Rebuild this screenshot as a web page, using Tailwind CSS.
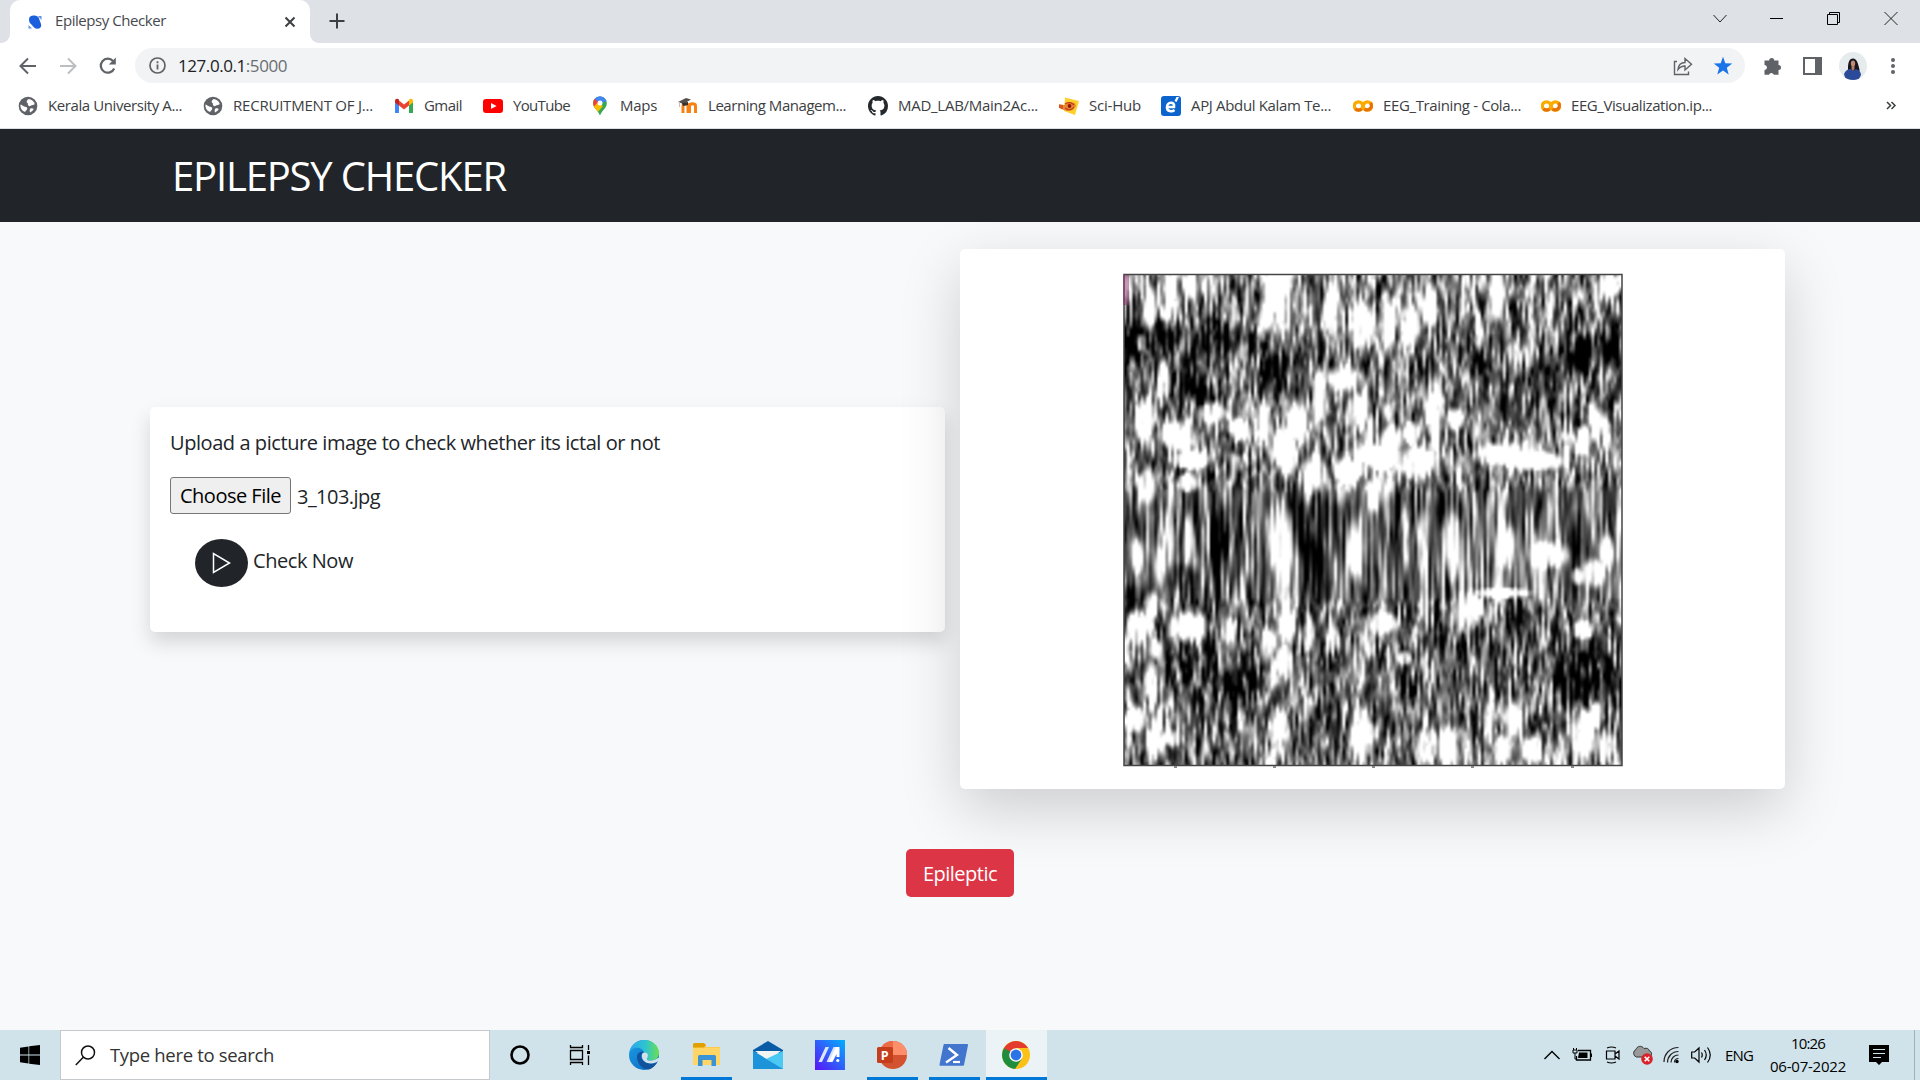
<!DOCTYPE html>
<html lang="en">
<head>
<meta charset="utf-8">
<title>Epilepsy Checker</title>
<script src="https://cdn.jsdelivr.net/npm/@tailwindcss/browser@4"></script>
</head>
<body class="w-[1920px] h-[1080px] overflow-hidden flex flex-col bg-[#f8f9fb] font-['Open_Sans','Noto_Sans',sans-serif] text-[#212529]">

<svg class="hidden">
  <symbol id="globe" viewBox="0 0 20 20"><circle cx="10" cy="10" r="9.300" fill="#5f6368"/><path d="M2.500 8.500c2 .3 2.600 2 4.500 2.200 2 .2 2.500 1 2.200 2.300-.3 1.300-1.700 1.500-2 3-3-1-5.200-3.800-4.700-7.500zM11 3c3 .5 5 2.500 5.800 5-1.300 1.600-2.700.6-3.800 1.600-1.200 1-2.600.6-3-.6-.4-1 .4-1.500-.8-2.200C8 6.200 8.700 3.800 11 3zM12.500 12.500c1.300-.6 2.700-.2 3.200.6-.8 1.800-2 2.700-3.600 3.300-.6-1.200-.6-3 .4-3.900z" fill="#fff"/></symbol>
  <symbol id="colab" viewBox="0 0 20 20"><circle cx="5.500" cy="10" r="4.200" fill="none" stroke="#f9ab00" stroke-width="3.300"/><circle cx="14.500" cy="10" r="4.200" fill="none" stroke="#f9ab00" stroke-width="3.300"/><path d="M11.500 12.900A4.200 4.200 0 0 0 17.500 7.100" fill="none" stroke="#e8710a" stroke-width="3.300"/><path d="M2.500 12.900A4.200 4.200 0 0 0 8.500 12.900" fill="none" stroke="#e8710a" stroke-width="3.300"/></symbol>
</svg>

<!-- tab strip -->
<header class="h-[129px] shrink-0 flex flex-col bg-white border-b border-[#dcdee1]">
  <div class="h-[43px] shrink-0 flex bg-[#dee1e6]">
    <div class="w-[10px] bg-white"><div class="h-full bg-[#dee1e6] rounded-br-[9px]"></div></div>
    <div class="w-[300px] h-full bg-[#dee1e6]">
      <div class="h-full bg-white rounded-t-[10px] flex items-center pl-[18px] pr-[13px]">
        <svg class="w-[14px] h-[14px]" viewBox="0 0 14 14"><path d="M1 4.500C1 1.500 3 .5 5.500.5c3 0 5.500 1 6 4.500l1.500 4c.8 3-1 4.700-3.500 4.700C6.500 13.700 5.500 12 4 10 2 8.500 1 7 1 4.500z" fill="#1a5fdc"/><path d="M.5 13.500V10l3.500 3.500zM10 1h3.500v4z" fill="#5d92ea"/></svg>
        <span data-w="111" class="ml-[13px] -mt-[2px] text-[15px] text-[#45494e] whitespace-nowrap">Epilepsy Checker</span>
        <svg class="ml-auto w-[14px] h-[14px]" viewBox="0 0 14 14"><path d="M2.500 2.500l9 9M11.500 2.500l-9 9" stroke="#3c4043" stroke-width="2"/></svg>
      </div>
    </div>
    <div class="w-[10px] bg-white"><div class="h-full bg-[#dee1e6] rounded-bl-[9px]"></div></div>
    <svg class="mt-[13px] ml-[9px] w-4 h-4" viewBox="0 0 16 16"><path d="M8 .5v15M.5 8h15" stroke="#3c4043" stroke-width="2"/></svg>
    <div class="ml-auto flex gap-[43px] mt-[11px] mr-[22px]">
      <svg class="w-[14px] h-[14px]" viewBox="0 0 14 14"><path d="M.5 4l6.500 7 6.500-7" fill="none" stroke="#222"/></svg>
      <svg class="w-[14px] h-[14px]" viewBox="0 0 14 14"><path d="M0 7.500h13" stroke="#000"/></svg>
      <svg class="w-[14px] h-[14px]" viewBox="0 0 14 14"><path d="M.5 3.500h10v10H.5zM2.500 3.500v-2h10v10h-2" fill="none" stroke="#000"/></svg>
      <svg class="w-[14px] h-[14px]" viewBox="0 0 14 14"><path d="M.5 1l13 13M13.500 1L.5 14" fill="none" stroke="#222"/></svg>
    </div>
  </div>

  <!-- toolbar -->
  <div class="h-[45px] shrink-0 flex items-center pl-[18px] pr-[18px] text-[#5f6368]">
    <svg class="w-[20px] h-[20px]" viewBox="0 0 20 20"><path d="M18 10H2.500M10 2.500L2.500 10l7.500 7.500" fill="none" stroke="#5f6368" stroke-width="2"/></svg>
    <svg class="ml-[20px] w-[20px] h-[20px]" viewBox="0 0 20 20"><path d="M2 10h15.500M10 2.500l7.500 7.500-7.500 7.500" fill="none" stroke="#bcbfc2" stroke-width="2"/></svg>
    <svg class="ml-[20px] w-[20px] h-[20px]" viewBox="0 0 20 20"><path d="M16.200 12.500A7 7 0 1 1 15 5" fill="none" stroke="#5f6368" stroke-width="2.200"/><path d="M17.800 1.500V8.500H10.800z" fill="#5f6368"/></svg>
    <div class="ml-[17px] w-[1610px] h-[35px] rounded-full bg-[#f1f3f4] flex items-center pl-[14px] pr-[12px]">
      <svg class="w-[17px] h-[17px]" viewBox="0 0 17 17"><circle cx="8.500" cy="8.500" r="7.500" fill="none" stroke="#5f6368" stroke-width="1.700"/><path d="M8.500 7.500v5M8.500 4.200v2" stroke="#5f6368" stroke-width="1.800"/></svg>
      <span data-w="109" class="ml-[12px] text-[17px] text-[#6a6e73] whitespace-nowrap"><span class="text-[#202124]">127.0.0.1</span>:5000</span>
      <svg class="ml-auto w-[20px] h-[20px]" viewBox="0 0 20 20"><path d="M4 5.500H1.500v13h14V15.500" fill="none" stroke="#5f6368" stroke-width="1.400"/><path d="M5 13.500c.5-5 3-7 7-7V2.500l6.500 5.700-6.500 5.800v-4c-3 0-5 1-7 3.500z" fill="none" stroke="#5f6368" stroke-width="1.400"/></svg>
      <svg class="ml-[20px] w-[20px] h-[20px]" viewBox="0 0 20 20"><path d="M10 .8l2.300 6.500 6.900.2-5.400 4.200 1.900 6.700L10 14.500l-5.700 3.900 1.900-6.700L.8 7.500l6.900-.2z" fill="#1a73e8"/></svg>
    </div>
    <svg class="ml-[18px] w-[20px] h-[20px]" viewBox="0 0 20 20"><path d="M1.500 4.500h4.700a2.500 2.500 0 1 1 5 0H15.500V9a2.500 2.500 0 1 1 0 5v4.800h-4.700a2.500 2.500 0 0 0-4.800 0H1.500V14a2.500 2.500 0 0 0 0-5z" fill="#5f6368"/></svg>
    <svg class="ml-[20px] w-[19px] h-[18px]" viewBox="0 0 19 18"><path d="M1 1h17v16H1z" fill="none" stroke="#5f6368" stroke-width="2"/><path d="M12 0h7v18h-7z" fill="#5f6368"/></svg>
    <svg class="ml-[17px] w-[28px] h-[28px]" viewBox="0 0 28 28"><clipPath id="av"><circle cx="14" cy="14" r="14"/></clipPath><g clip-path="url(#av)"><path d="M0 0h28v28H0z" fill="#e6ebee"/><path d="M9 17c0-6 1-10.500 5-10.500s5 5 6.500 11L20 24H9z" fill="#17151c"/><path d="M5 22c2-4 4-5 7-5l2 2 3-2c3 1 5 3 5 6l-3 6H7z" fill="#2b4a99"/><ellipse cx="14" cy="11.500" rx="2.200" ry="3" fill="#c08a76"/><path d="M12.500 14h3v3l-1.500 2-1.500-2z" fill="#b27c69"/></g></svg>
    <svg class="ml-auto mr-[6px] w-[6px] h-[18px]" viewBox="0 0 6 18"><circle cx="3" cy="3" r="2" fill="#5f6368"/><circle cx="3" cy="9" r="2" fill="#5f6368"/><circle cx="3" cy="15" r="2" fill="#5f6368"/></svg>
  </div>

  <!-- bookmarks -->
  <div class="h-[36px] flex items-center pl-[18px] text-[15px] text-[#3c4043] whitespace-nowrap [&>div]:flex [&>div]:items-center [&>div]:gap-[10px] [&>div]:shrink-0 [&_svg]:w-5 [&_svg]:h-5 [&_svg]:shrink-0 [&_span]:-mt-px">
    <div class="w-[185px]"><svg><use href="#globe"/></svg><span data-w="134">Kerala University A...</span></div>
    <div class="w-[191px]"><svg><use href="#globe"/></svg><span data-w="140">RECRUITMENT OF J...</span></div>
    <div class="w-[89px]"><svg viewBox="0 0 20 20"><path d="M1 5v12h4V9z" fill="#4285f4"/><path d="M19 5v12h-4V9z" fill="#34a853"/><path d="M5 4.500l5 4 5-4v5l-5 4-5-4z" fill="#ea4335"/><path d="M1 5c0-2 2-3 4-1.500v6l-4-3z" fill="#c5221f"/><path d="M19 5c0-2-2-3-4-1.500v6l4-3z" fill="#fbbc04"/></svg><span data-w="38">Gmail</span></div>
    <div class="w-[107px]"><svg viewBox="0 0 20 20"><rect y="3" width="20" height="14" rx="3" fill="#f00"/><path d="M8 7l5.500 3L8 13z" fill="#fff"/></svg><span data-w="57">YouTube</span></div>
    <div class="w-[88px]"><svg viewBox="0 0 20 20"><clipPath id="pin"><path d="M10 .5c4 0 6.800 3 6.800 6.700 0 4.800-4.300 6.300-6.800 12.300C7.500 13.500 3.200 12 3.200 7.200 3.200 3.500 6 .5 10 .5z"/></clipPath><g clip-path="url(#pin)"><path d="M0 0h20v20H0z" fill="#34a853"/><path d="M3 0h14l-10 9z" fill="#4285f4"/><path d="M0 2l5 1 4 4-6 6z" fill="#ea4335"/><path d="M2 13l5-6 6 3-6 7z" fill="#fbbc04"/><path d="M5 0h12v5l-6 2z" fill="#4285f4"/></g><circle cx="10" cy="7" r="2.500" fill="#fff"/></svg><span data-w="37">Maps</span></div>
    <div class="w-[190px]"><svg viewBox="0 0 20 20"><path d="M5 17V10c0-3 5-3 5 0v7M11.500 17V10c0-3 6-3 6 0v7" fill="none" stroke="#f98012" stroke-width="3"/><path d="M0 6l8-4 5 1.500L5.500 8z" fill="#55504c"/><path d="M4 7l6-1v3l-5 1z" fill="#333"/><path d="M1.500 6v5" stroke="#cbb"/></svg><span data-w="138">Learning Managem...</span></div>
    <div class="w-[191px]"><svg viewBox="0 0 16 16"><path fill="#24292e" d="M8 0C3.580 0 0 3.580 0 8c0 3.540 2.290 6.530 5.470 7.590.4.070.55-.17.55-.38 0-.19-.01-.82-.01-1.490-2.010.37-2.530-.49-2.690-.94-.09-.23-.48-.94-.82-1.130-.28-.15-.68-.52-.01-.53.63-.01 1.080.58 1.230.82.720 1.210 1.870.87 2.330.66.070-.52.28-.87.51-1.070-1.780-.2-3.640-.89-3.640-3.950 0-.87.31-1.590.82-2.150-.08-.2-.36-1.020.08-2.120 0 0 .67-.21 2.200.82.640-.18 1.320-.27 2-.27s1.360.09 2 .27c1.530-1.040 2.200-.82 2.200-.82.440 1.100.16 1.920.08 2.120.51.560.82 1.270.82 2.150 0 3.070-1.870 3.750-3.650 3.950.29.25.54.730.54 1.480 0 1.070-.01 1.930-.01 2.200 0 .21.15.46.55.38A8.010 8.010 0 0 0 16 8c0-4.420-3.580-8-8-8z"/></svg><span data-w="140">MAD_LAB/Main2Ac...</span></div>
    <div class="w-[102px]"><svg viewBox="0 0 20 20"><path d="M6 1.500l14 3.500-4 14-11-4z" fill="#ffd02c"/><path d="M0 8l5 1 6-3 5 1 1 3-3 4-6 1-6-2-2-1z" fill="#e8892f"/><path d="M6 8q5-3 9 1M6 12q5 4 9-1M1 9v3M3 9v4" stroke="#c43a1a" fill="none" stroke-width="1.200"/><circle cx="10.500" cy="10" r="1.900" fill="#8c1a10"/></svg><span data-w="52">Sci-Hub</span></div>
    <div class="w-[192px]"><svg viewBox="0 0 20 20"><rect width="20" height="20" rx="3" fill="#0b63ce"/><path d="M6 11h7C13.500 7.500 12 6.800 10 6.800c-2.500 0-4 2-4 4.400 0 4.500 5 5 7.500 2.800" fill="none" stroke="#fff" stroke-width="2.600"/><path d="M13.500 5l2-4h2.500l-2.500 5z" fill="#fff"/></svg><span data-w="140">APJ Abdul Kalam Te...</span></div>
    <div class="w-[188px]"><svg><use href="#colab"/></svg><span data-w="138">EEG_Training - Cola...</span></div>
    <div class="w-[340px]"><svg><use href="#colab"/></svg><span data-w="141">EEG_Visualization.ip...</span></div>
    <svg viewBox="0 0 20 20"><path d="M6 6l3.500 3.500L6 13M10.500 6L14 9.500 10.500 13" fill="none" stroke="#3c4043" stroke-width="1.500"/></svg>
  </div>
</header>

<!-- page -->
<nav class="h-[93px] shrink-0 bg-[#212529] flex items-center pl-[172px]">
  <span data-w="334" class="mt-px text-[40px] leading-none text-white whitespace-nowrap">EPILEPSY CHECKER</span>
</nav>
<main class="h-[808px] shrink-0 flex flex-col items-center overflow-hidden">
  <div class="mt-[27px] w-[1635px] h-[540px] self-start ml-[150px] flex items-center justify-between shrink-0">
    <section class="w-[795px] h-[225px] bg-white rounded-[5px] shadow-[0_10px_20px_rgba(0,0,0,0.15)] px-[20px] pt-[21px] text-[20px] leading-[30px] whitespace-nowrap">
      <p><span data-w="490">Upload a picture image to check whether its ictal or not</span></p>
      <div class="mt-[19px] flex items-center">
        <div class="w-[121px] h-[37px] border border-[#767676] rounded-[3px] bg-[#efefef] text-black flex items-center justify-center pt-[2px]"><span data-w="101">Choose File</span></div>
        <span data-w="83" class="ml-[6px] mt-[4px]">3_103.jpg</span>
      </div>
      <div class="mt-[25px] ml-[25px] flex">
        <div class="w-[53px] h-[48px] rounded-[50%] bg-[#212529] flex items-center justify-center">
          <svg class="w-[20px] h-[22px]" viewBox="0 0 20 22"><path d="M1.500 1.500v19l16-9.500z" fill="none" stroke="#fff" stroke-width="1.500"/></svg>
        </div>
        <span data-w="100" class="ml-[5px] mt-[7px]">Check Now</span>
      </div>
    </section>
    <section class="w-[825px] h-[540px] bg-white rounded-[5px] shadow-[0_20px_60px_rgba(0,0,0,0.175)] pt-[24px] pl-[163px]">
      <canvas id="eeg" class="w-[500px] h-[496px]" width="500" height="496"></canvas>
    </section>
  </div>
  <button class="mt-[60px] w-[108px] h-[48px] shrink-0 rounded-[5px] bg-[#dc3545] text-white text-[20px] flex items-center justify-center"><span data-w="74" class="mt-[2px] whitespace-nowrap">Epileptic</span></button>
</main>

<!-- taskbar -->
<footer class="h-[50px] shrink-0 bg-[#d0e3eb] flex items-center text-black">
  <svg class="ml-[20px] w-[20px] h-[20px]" viewBox="0 0 20 20"><path d="M0 2.700l8.500-1.200v8H0zM9.200 1.300L20 0v9.500H9.200zM0 10.500h8.500v8L0 17.300zM9.200 10.500H20V20L9.200 18.700z"/></svg>
  <div class="ml-[20px] w-[430px] h-[50px] bg-white border border-[#c5c9cc] flex items-center pl-[14px]">
    <svg class="w-[21px] h-[21px]" viewBox="0 0 21 21"><circle cx="13" cy="7.500" r="6.500" fill="none" stroke="#111" stroke-width="1.500"/><path d="M8.500 12L.8 20" stroke="#111" stroke-width="1.500"/></svg>
    <span data-w="164" class="ml-[14px] text-[18.500px] text-[#333] whitespace-nowrap">Type here to search</span>
  </div>
  <svg class="ml-[20px] w-[20px] h-[20px]" viewBox="0 0 20 20"><circle cx="10" cy="10" r="8.500" fill="none" stroke="#000" stroke-width="2.600"/></svg>
  <svg class="ml-[39px] w-[22px] h-[22px]" viewBox="0 0 22 22"><path d="M1.500 6.500h12v9h-12zM1.500 1v2.500h12V1M1.500 21v-2.500h12V21M19.500 1v5M19.500 11.500V21" fill="none" stroke="#000" stroke-width="1.300"/><path d="M18 7h3v3h-3z"/></svg>
  <div class="ml-[28px] h-full flex [&>div]:h-full [&>div]:flex [&>div]:items-center [&>div]:justify-center [&>div]:border-b-[3px] [&>div]:border-transparent [&>div]:pt-[3px] [&>div]:pr-[2px] [&_svg]:w-[30px] [&_svg]:h-[30px]">
    <div class="w-[51px] mr-[11px]">
      <svg viewBox="0 0 30 30"><defs><linearGradient id="e1" x1="0" x2="1"><stop offset="0" stop-color="#2aa6ee"/><stop offset=".55" stop-color="#2fc4cf"/><stop offset="1" stop-color="#6be04e"/></linearGradient><linearGradient id="e2" x1="0" x2="1" y2="1"><stop offset="0" stop-color="#1b9de2"/><stop offset="1" stop-color="#0a66c2"/></linearGradient></defs><circle cx="15" cy="15" r="15" fill="url(#e2)"/><path d="M.5 12C2 5 8 0 15 0c9 0 15 6 15 13 0 5-4 7.500-8 7.500-3 0-4.500-1-4-2 2-3 0-6.500-3-6.500-1-3-5-5-9-4-3 1-4.500 2.500-5.500 4z" fill="url(#e1)"/><path d="M8 17c0 7 6 13 12 12.500 3-1 6.500-4 8.500-7.500-5 2.500-12 2-15-2-2-3-1.500-6 1-8-4-1-6.500 2-6.500 5z" fill="#10529c"/><path d="M13 14.500c-1 5 3 9 9 9 3 0 5.500-1.200 7-2.500l3-3v-1l-4 1.500c-4 3-11 2.500-10 0 2-3 .5-6-1.500-6-2 0-3 .5-3.500 2z" fill="#d0e3eb"/></svg>
    </div>
    <div class="w-[51px] mr-[11px] border-[#0078d7]!">
      <svg viewBox="0 0 30 30"><path d="M2 4h12l1 3h14v18H2z" fill="#ffca45"/><path d="M2 4.500A1.500 1.500 0 0 1 3.500 3H13l2 2-2 2.500H2z" fill="#e0a000"/><path d="M2 8h27v17H2z" fill="#ffd566"/><path d="M7 26V16.500A1.500 1.500 0 0 1 8.500 15h15a1.500 1.500 0 0 1 1.500 1.500V26h-4.500v-6h-9v6z" fill="#3a93d4"/></svg>
    </div>
    <div class="w-[51px] mr-[11px]">
      <svg viewBox="0 0 30 30"><path d="M0 10L15 1l15 9v3H0z" fill="#0a5ba5"/><path d="M2 11h26L15 20z" fill="#f4f4f4"/><path d="M0 11l15 9 15-9v18H0z" fill="#2faee8"/><path d="M30 11L13 19 0 29h30z" fill="#4cc9f2"/><path d="M0 11l30 18H0z" fill="#1d93da"/></svg>
    </div>
    <div class="w-[51px] mr-[11px]">
      <svg viewBox="0 0 30 30"><defs><linearGradient id="ma" x1="0" y1="1" x2="1" y2="0"><stop offset="0" stop-color="#5b12f5"/><stop offset=".5" stop-color="#3060fb"/><stop offset="1" stop-color="#00b0ff"/></linearGradient></defs><path d="M0 0h30v30H0z" fill="url(#ma)"/><path d="M10.500 7H14L7 22H3.500zM18.500 7H22l-7 15h-3.500z" fill="#dbe5ff"/><path d="M21 7h3.500v10h-3v-3l-4 8H14z" fill="#fff"/><circle cx="22.800" cy="20.500" r="1.600" fill="#fff"/></svg>
    </div>
    <div class="w-[51px] mr-[11px] border-[#0078d7]!">
      <svg viewBox="0 0 30 30"><circle cx="16" cy="15" r="14" fill="#d35230"/><path d="M16 1a14 14 0 0 1 14 14H16z" fill="#ff8f6b"/><path d="M16 1v14H2A14 14 0 0 1 16 1z" fill="#ed6c47"/><rect y="7" width="16" height="16" rx="1.500" fill="#c43e1c"/><text x="3.800" y="19.500" font-family="Open Sans" font-weight="700" font-size="12.500" fill="#fff">P</text></svg>
    </div>
    <div class="w-[51px] mr-[6px] border-[#0078d7]!">
      <svg viewBox="0 0 30 30"><path d="M5.500 4H28a1 1 0 0 1 1 1.200L25 25a1 1 0 0 1-1 .8H1.500a1 1 0 0 1-1-1.200L4.500 5a1 1 0 0 1 1-1z" fill="#4275ce"/><path d="M9.500 8l8.500 7L7 22.500" fill="none" stroke="#fff" stroke-width="2.400"/><path d="M14 22h7" stroke="#fff" stroke-width="2.200"/></svg>
    </div>
    <div class="w-[61px] bg-[#ecf3f7] border-[#0078d7]!">
      <svg viewBox="0 0 30 30"><circle cx="15" cy="15" r="14" fill="#fbc116"/><path d="M15 15L2.900 8A14 14 0 0 0 14 29l7-10.500z" fill="#1e8e3e"/><path d="M2.900 8A14 14 0 0 1 27.100 8H15L9 18.500z" fill="#e33b2e"/><path d="M2.900 8l6 10.500L15 15z" fill="#1e8e3e"/><circle cx="15" cy="15" r="6.800" fill="#fff"/><circle cx="15" cy="15" r="5.400" fill="#2a74e8"/></svg>
    </div>
  </div>
  <div class="ml-auto flex items-center h-full">
    <svg class="w-[16px] h-[10px]" viewBox="0 0 16 10"><path d="M.5 9L8 1.500 15.500 9" fill="none" stroke="#000" stroke-width="1.400"/></svg>
    <svg class="ml-[12px] w-[20px] h-[16px]" viewBox="0 0 20 16"><path d="M6 3.500h12.500v9.500H4.500V9M19.500 6.500v3.500" fill="none" stroke="#000" stroke-width="1.300"/><path d="M7 5.500h8.500V11H6z"/><path d="M1 3h4v3H1zM1.500 1v2M4.500 1v2M3 6v6h1.500" fill="none" stroke="#000"/></svg>
    <svg class="ml-[13px] w-[16px] h-[18px]" viewBox="0 0 16 18"><path d="M1.500 5h8.500v8H1.500zM10 8l4-3v8l-4-3M2 2q4.500-2 9 0M2 16q4.500 2 9 0" fill="none" stroke="#000" stroke-width="1.200"/></svg>
    <svg class="ml-[11px] w-[21px] h-[20px]" viewBox="0 0 21 20"><path d="M4.500 12a4 4 0 0 1-.5-7.500C5 1 9.500 0 12 3.500c3-1 5 .5 5.500 2.500 2.500.5 3 5 0 6z" fill="#999" stroke="#333"/><circle cx="15" cy="14" r="5.800" fill="#d9222a"/><path d="M12.700 11.700l4.600 4.600M17.300 11.700l-4.600 4.600" stroke="#fff" stroke-width="1.600"/></svg>
    <svg class="ml-[10px] w-[17px] h-[18px]" viewBox="0 0 17 18"><path d="M1 16C1 8 7 1.500 15.500 1.500M4.500 16.500c0-6 4.500-11 11-11M8 16.500c0-4 3-7.500 7.500-7.500M11.500 16.500c0-2.500 1.500-4 4-4" fill="none" stroke="#222" stroke-width="1.200"/><circle cx="14" cy="15.500" r="1.700"/></svg>
    <svg class="ml-[11px] w-[21px] h-[18px]" viewBox="0 0 21 18"><path d="M.7 6h3L8 2v14l-4.300-4H.7zM10.500 6.500q1.500 2.500 0 5M13.500 4q3.500 5 0 10M16.500 1.500q5.500 7.500 0 15" fill="none" stroke="#000" stroke-width="1.200"/></svg>
    <span data-w="28" class="ml-[13px] text-[15px]">ENG</span>
    <div class="ml-[17px] w-[76px] text-[15px] leading-[23px] flex flex-col items-center whitespace-nowrap"><span data-w="34">10:26</span><span data-w="76">06-07-2022</span></div>
    <svg class="ml-[23px] w-[20px] h-[20px]" viewBox="0 0 20 20"><path d="M0 0h20v17h-7l-3 3-3-3H0z"/><path d="M4 4.500h12M4 8.500h12M4 12.500h8" stroke="#d0e3eb" stroke-width="1.200"/></svg>
    <div class="ml-[25px] w-[6px] h-full border-l border-[#9fb2bb]"></div>
  </div>
</footer>

<script>
// Tracks each label to its slot width once the styles are in place
function fit() {
  document.querySelectorAll('[data-w]').forEach(function (el) {
    el.style.display = 'inline-block';
    el.style.letterSpacing = '0px';
    var r = document.createRange();
    r.selectNodeContents(el);
    var n = el.textContent.length, w = r.getBoundingClientRect().width;
    el.style.letterSpacing = ((+el.dataset.w - w) / n) + 'px';
  });
}
fit();
window.addEventListener('load', fit);
document.fonts.ready.then(fit);
new ResizeObserver(fit).observe(document.querySelector('nav'));

// Spectrogram: brightness grid modulated by vertically streaked noise
var map = [
'676559564445664546','554448566665453445','212135546563433423','131343365553234324',
'451444466556443344','766667746557633446','567549647986488776','566545976766544445',
'544454235534543445','554547246446456546','656458347556547656','443445355443556466',
'566434554655754455','654536654444334544','553335334444433423','553434445543345324',
'653446346553465365','565357346557565476'];
// Peaks and troughs: centre x, centre y, radius x, radius y
var bright = [[490,110,42,100],[115,150,20,60],[175,110,18,70],[235,75,20,40],[655,140,20,70],[745,200,35,55],[820,200,20,80],[885,190,25,50],[945,140,22,60],[1145,100,20,90],[1090,220,12,60],[1480,80,25,35],[690,360,45,35],[620,420,18,70],[100,490,25,60],[200,530,45,40],[380,510,25,30],[455,490,18,60],[520,570,35,70],[550,490,30,60],[300,460,35,30],[740,450,25,45],[960,450,25,85],[800,590,80,35],[830,550,35,40],[900,610,60,40],[1020,480,25,30],[890,520,20,30],[1160,585,80,30],[1260,605,90,25],[240,600,50,25],[230,670,30,25],[600,645,30,52],[710,630,50,30],[110,680,25,50],[510,850,28,110],[720,870,22,80],[1015,860,22,90],[1175,860,28,60],[1300,885,50,35],[780,700,18,50],[230,840,15,70],[80,890,18,50],[150,920,15,60],[1160,1000,75,14],[1070,1050,25,50],[120,1040,20,40],[80,1100,25,50],[235,1100,50,40],[350,1110,20,35],[520,1090,20,50],[590,1120,15,50],[655,1130,15,50],[800,1090,50,30],[465,1150,20,50],[510,1200,20,40],[870,1195,20,20],[120,1265,18,55],[135,1170,15,30],[500,1410,28,70],[740,1420,25,80],[130,1440,25,60],[930,1460,30,50],[1000,1460,30,60],[1125,1390,12,60],[1160,1470,25,40],[1250,1470,25,40],[1400,1430,40,70],[1440,1370,15,40],[80,1380,25,35],[180,1435,25,25],[1190,1370,22,40],[1400,540,25,40],[1435,490,15,60],[1430,940,35,40],[1470,880,20,50],[1400,1110,35,25],[1385,950,18,25],[1240,270,13,60],[1300,150,13,60],[1200,300,12,60],[90,250,12,25],[155,370,15,60],[1465,1460,15,50]];
var dark = [[150,220,60,40],[80,260,50,50],[210,400,50,60],[320,230,60,60],[440,240,40,30],[490,350,50,60],[1080,300,50,50],[1390,280,35,110],[1480,250,35,60],[860,480,30,25],[600,850,38,160],[310,850,12,130],[200,950,50,35],[1030,560,30,40],[1210,1060,40,35],[240,1200,80,60],[250,1280,40,60],[390,1270,60,60],[1390,1250,80,90],[1000,1170,40,70],[620,1380,40,50],[660,1210,40,40],[1050,830,12,90],[380,570,25,20],[70,1020,30,40],[1260,1390,30,25],[210,635,25,12],[890,730,50,60]];
var seed = 77;
function rnd() { seed = (seed * 1664525 + 1013904223) >>> 0; return seed / 4294967296; }
var N = 180, src = document.createElement('canvas');
src.width = N; src.height = N;
var sc = src.getContext('2d'), im = sc.createImageData(N, N);
function layer(kx, ky) {
  var gw = Math.ceil(N / kx) + 3, gh = Math.ceil(N / ky) + 3, g = [], off = [];
  for (var i = 0; i < gw * gh; i++) g.push(rnd());
  for (i = 0; i < gw; i++) off.push(rnd());
  return function (x, y) {
    var fx = x / kx, ix = Math.floor(fx), tx = fx - ix;
    function col(c) { var fy = y / ky + off[c], iy = Math.floor(fy), t = fy - iy; return g[iy * gw + c] * (1 - t) + g[(iy + 1) * gw + c] * t; }
    return kx === 1 ? col(ix) : col(ix) * (1 - tx) + col(ix + 1) * tx;
  };
}
var A = layer(1, 6), B = layer(2.3, 7), D = layer(1, 2.5);
function base(x, y) {
  var fx = Math.max(0, Math.min(16.999, x / N * 18 - .5)), fy = Math.max(0, Math.min(16.999, y / N * 18 - .5));
  var i = Math.floor(fx), j = Math.floor(fy), a = fx - i, b = fy - j;
  return (map[j][i] * (1 - a) + map[j][i + 1] * a) * (1 - b) + (map[j + 1][i] * (1 - a) + map[j + 1][i + 1] * a) * b;
}
function field(list, x, y) {
  var X = 40 + (x + .5) / N * 1475, Y = 45 + (y + .5) / N * 1470, m = 0;
  for (var k = 0; k < list.length; k++) {
    var e = list[k], dx = (X - e[0]) / e[2], dy = (Y - e[1]) / e[3], r = dx * dx + dy * dy;
    if (r < 4) m = Math.max(m, Math.exp(-r * r * .8));
  }
  return m;
}
for (var y = 0; y < N; y++) for (var x = 0; x < N; x++) {
  var yy = y < 80 ? y : y < 118 ? 80 + (y - 80) * .4 : y - 22.8;
  var n = (A(x, yy) - .5) * 1.2 + (B(x, yy) - .5) * .75 + (D(x, yy) - .5) * .55;
  var v = .43 + (base(x, y) - 4.6) * .085 + n * .95;
  if (v < .42) v = .42 - (.42 - v) * .7;
  v += field(bright, x, y) * .85 - field(dark, x, y) * .28;
  v = Math.max(0, Math.min(1, v)) * 255;
  var p = (y * N + x) * 4;
  im.data[p] = im.data[p + 1] = im.data[p + 2] = v; im.data[p + 3] = 255;
}
sc.putImageData(im, 0, 0);
var c = document.getElementById('eeg').getContext('2d');
c.imageSmoothingQuality = 'high';
c.drawImage(src, 1, 1, 498, 491);
c.strokeStyle = '#444'; c.lineWidth = 1.5; c.strokeRect(1, 1.500, 498, 491);
c.fillStyle = 'rgba(140,50,110,.5)'; c.fillRect(0, 2, 6, 30);
c.fillStyle = '#888';
[51, 150, 249, 348, 448].forEach(function (t) { c.fillRect(t, 493, 3, 2); });
</script>
</body>
</html>
